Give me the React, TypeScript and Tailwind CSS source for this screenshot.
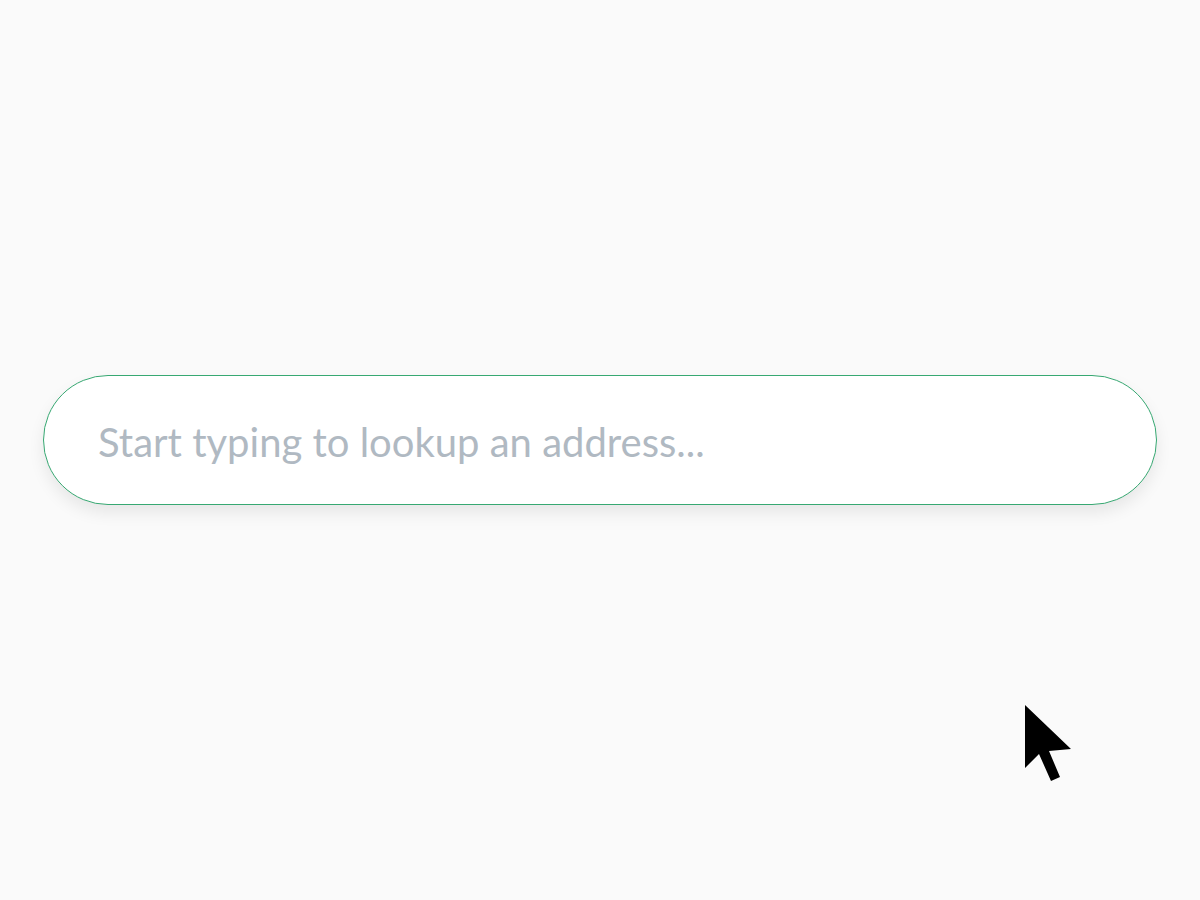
export default function App() {
  return (
    <div className="relative w-[1200px] h-[900px] bg-[#fafafa] flex flex-col" style={{ fontFamily: 'Lato, "Noto Sans", sans-serif' }}>
      <div className="pt-[375px] px-[43px]">
        <div className="h-[130px] rounded-full border border-[#37a872] bg-white shadow-[0_8px_16px_rgba(0,0,0,0.08)] flex items-center pl-[54px]">
          <input
            type="text"
            placeholder="Start typing to lookup an address..."
            className="w-full bg-transparent outline-none text-[40px] leading-[48px] mt-[4px] text-[#333] placeholder:text-[#b0b9c2]"
            style={{ fontFamily: 'Lato, "Noto Sans", sans-serif' }}
          />
        </div>
      </div>
      <svg className="absolute left-[1024px] top-[704px]" width="50" height="80" viewBox="0 0 50 80">
        <path d="M1 1 L1 64 L15 50 L27 77 L36 73 L25 47 L47 45 Z" fill="#000" />
      </svg>
    </div>
  );
}
